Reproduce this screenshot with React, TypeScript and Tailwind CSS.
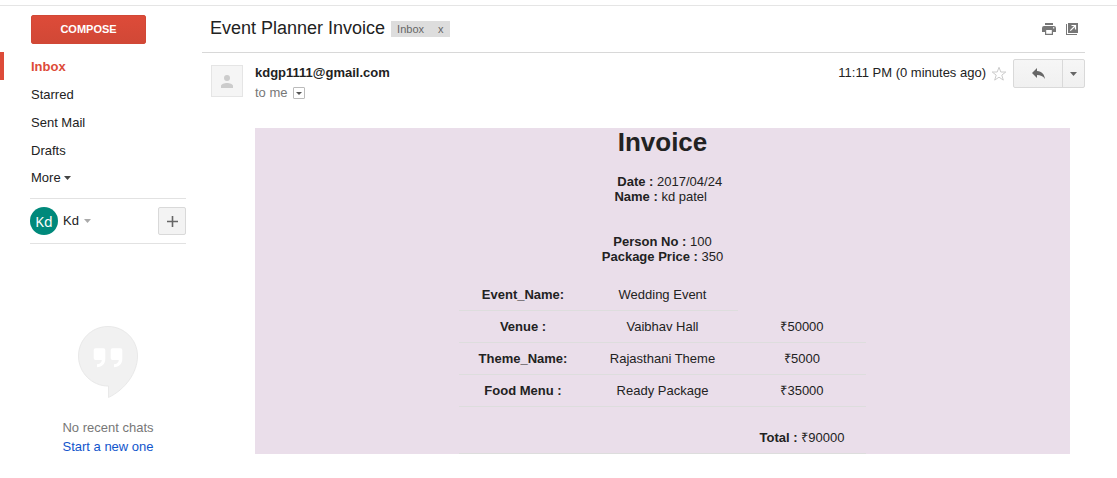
import React from "react";

const folders = ["Starred", "Sent Mail", "Drafts"];

const items = [
  { label: "Event_Name:", value: "Wedding Event", price: "" },
  { label: "Venue :", value: "Vaibhav Hall", price: "₹50000" },
  { label: "Theme_Name:", value: "Rajasthani Theme", price: "₹5000" },
  { label: "Food Menu :", value: "Ready Package", price: "₹35000" },
];

function Caret({ className }: { className: string }) {
  return (
    <svg viewBox="0 0 7 4" className={`h-1 w-[7px] ${className}`} fill="currentColor" aria-hidden="true">
      <path d="M0 0h7L3.5 4z" />
    </svg>
  );
}

function Sidebar() {
  return (
    <aside className="flex w-[202px] shrink-0 flex-col pt-[9px] pr-4">
      <button className="ml-[31px] h-[29px] w-[115px] rounded-[2px] border border-[#d14836] bg-linear-to-b from-[#dd4b39] to-[#d14836] text-[11px] font-bold text-white">
        COMPOSE
      </button>
      <nav className="mt-2 flex flex-col leading-[26px]">
        <a href="#inbox" className="border-l-4 border-[#dd4b39] pt-[2px] pl-[27px] font-bold text-[#dd4b39]">
          Inbox
        </a>
        {folders.map((name) => (
          <a key={name} href="#folder" className="pt-[2px] pl-[31px]">
            {name}
          </a>
        ))}
        <button className="flex h-[26px] items-center gap-[3px] pt-[2px] pl-[31px]">
          More <Caret className="text-[#444]" />
        </button>
      </nav>
      <div className="mt-2 ml-[30px] flex h-[46px] items-center border-y border-[#e2e2e2]">
        <span className="flex size-7 items-center justify-center rounded-full bg-[#00897b] pt-px font-['Noto_Sans',sans-serif] text-[14px] text-white">
          Kd
        </span>
        <button className="ml-[5px] flex items-center gap-[5px]">
          Kd <Caret className="text-[#aaa]" />
        </button>
        <button
          aria-label="New conversation"
          className="ml-auto flex size-7 items-center justify-center rounded-[2px] border border-[#d9d9d9] bg-[#f3f3f3] text-[#666]"
        >
          <svg viewBox="0 0 11 11" className="size-[11px]" fill="currentColor">
            <path d="M4.7 0h1.6v4.7H11v1.6H6.3V11H4.7V6.3H0V4.7h4.7z" />
          </svg>
        </button>
      </div>
      <div className="mt-[82px] ml-[30px] flex flex-col items-center leading-[19px]">
        <svg viewBox="0 0 60 72" className="h-[72px] w-[60px]" aria-hidden="true">
          <path
            d="M30 .5C13.700.5.5 13.700.5 30S13.700 60 30 60h.5v11.500C47 63.500 59.500 47 59.500 30 59.500 13.700 46.300.5 30 .5z"
            fill="#f1f1f1"
            stroke="#e9e9e9"
          />
          <path
            d="M17.500 22.300h8a1.800 1.800 0 0 1 1.800 1.800v9c0 4.800-3.200 8-8.300 8.200v-3c2.900-.2 4.600-1.800 4.800-4.300h-6.300a1.800 1.800 0 0 1-1.800-1.800v-8.100a1.800 1.800 0 0 1 1.800-1.800zM34.500 22.300h8a1.800 1.800 0 0 1 1.800 1.800v9c0 4.800-3.200 8-8.300 8.200v-3c2.900-.2 4.600-1.800 4.800-4.300h-6.300a1.800 1.800 0 0 1-1.800-1.800v-8.100a1.800 1.800 0 0 1 1.800-1.800z"
            fill="#fff"
          />
        </svg>
        <p className="mt-5 text-[#777]">No recent chats</p>
        <a href="#chat" className="text-[#15c]">
          Start a new one
        </a>
      </div>
    </aside>
  );
}

function Subject() {
  return (
    <header className="flex h-[47px] items-center border-b border-[#d8d8d8] pr-[7px] pl-2 text-[#777]">
      <h1 className="pb-[2px] text-[18px] leading-6 text-[#222]">Event Planner Invoice</h1>
      <span className="ml-[6px] flex h-4 items-center bg-[#ddd] text-[11px] text-[#666]">
        <span className="pl-[6px]">Inbox</span>
        <button aria-label="Remove label" className="ml-2 px-[6px]">
          x
        </button>
      </span>
      <button aria-label="Print" className="ml-auto">
        <svg viewBox="0 0 14 12" className="h-3 w-[14px]">
          <path
            fill="currentColor"
            fillRule="evenodd"
            d="M3 0h8v2H3zM2 3h10a2 2 0 0 1 2 2v4h-3v3H3V9H0V5a2 2 0 0 1 2-2zM4.200 7v3.800h5.600V7zM11 4.200v1.300h1.300V4.200z"
          />
        </svg>
      </button>
      <button aria-label="Open in new window" className="ml-[10px]">
        <svg viewBox="0 0 12 12" className="size-3">
          <path fill="currentColor" d="M2 0h10v10H2zM0 1h1v10h10v1H0z" />
          <path d="M4.300 7.700 9 3M5.500 2.500h4v4" fill="none" stroke="#fff" strokeWidth="1.200" />
        </svg>
      </button>
    </header>
  );
}

function Sender() {
  return (
    <div className="flex pt-[6px] pl-[9px]">
      <span className="mt-[6px] flex size-8 items-center justify-center border border-[#e5e5e5] bg-[#f5f5f5]">
        <svg viewBox="0 0 12 13" className="h-[13px] w-3" fill="#ccc" aria-hidden="true">
          <circle cx="6" cy="3" r="3" />
          <path d="M0 13v-2c0-2 3.500-3 6-3s6 1 6 3v2z" />
        </svg>
      </span>
      <div className="ml-3 pt-1 leading-5">
        <p className="font-bold">kdgp1111@gmail.com</p>
        <p className="flex items-center gap-[5px] text-[#777]">
          to me
          <button
            aria-label="Show details"
            className="flex size-3 items-center justify-center rounded-[1px] border border-[#bbb] text-[#555]"
          >
            <svg viewBox="0 0 6 3" className="h-[3px] w-[6px]" fill="currentColor">
              <path d="M0 0h6L3 3z" />
            </svg>
          </button>
        </p>
      </div>
      <div className="ml-auto flex h-[29px] items-center">
        <span className="pb-[2px]">11:11 PM (0 minutes ago)</span>
        <button aria-label="Star" className="mr-[6px] ml-[5px]">
          <svg viewBox="0 0 16 16" className="size-4">
            <path
              d="M8 1.300 9.800 6h5l-4 3.100 1.500 5L8 11.200l-4.300 2.900 1.500-5L1.200 6h5z"
              fill="#fff"
              stroke="#ccc"
            />
          </svg>
        </button>
        <div className="flex h-[29px] rounded-[2px] border border-[#d9d9d9] bg-linear-to-b from-[#f6f6f6] to-[#f0f0f0] text-[#666]">
          <button aria-label="Reply" className="flex w-12 items-center justify-center">
            <svg viewBox="0 0 13 11" className="h-[11px] w-[13px]" fill="currentColor">
              <path d="M5 0v3c5 .5 7.500 3.500 8 8-2-3-4.500-4-8-4v3L0 5z" />
            </svg>
          </button>
          <button
            aria-label="More actions"
            className="flex w-[22px] items-center justify-center border-l border-[#d9d9d9]"
          >
            <Caret className="text-[#666]" />
          </button>
        </div>
      </div>
    </div>
  );
}

function Invoice() {
  return (
    <article className="mt-[25px] mr-[15px] ml-[53px] bg-[#eadeea] text-center leading-[15px]">
      <h2 className="pb-[2px] text-[26px] leading-7 font-bold">Invoice</h2>
      <div className="pt-4">
        <p>
          {"\u00a0\u00a0\u00a0\u00a0"}
          <b>Date :</b> 2017/04/24
        </p>
        <p>
          <b>Name :</b> kd patel{"\u00a0"}
        </p>
      </div>
      <div className="pt-[30px] pb-[15px]">
        <p>
          <b>Person No :</b> 100
        </p>
        <p>
          <b>Package Price :</b> 350
        </p>
      </div>
      <table className="mx-auto border-separate border-spacing-0">
        <tbody>
          {items.map((item) => (
            <tr key={item.label} className="h-8">
              <th className="w-32 border-b border-[#dddddd] py-2">{item.label}</th>
              <td className="w-[151px] border-b border-[#dddddd] py-2">{item.value}</td>
              {item.price && <td className="w-32 border-b border-[#dddddd] py-2">{item.price}</td>}
            </tr>
          ))}
          <tr>
            <td colSpan={2} className="border-b border-[#dddddd]" />
            <td className="border-b border-[#dddddd] pt-[23px] pb-2">
              <b>Total :</b> ₹90000
            </td>
          </tr>
        </tbody>
      </table>
    </article>
  );
}

export default function App() {
  return (
    <div className="min-h-screen bg-white pt-[5px] font-['Liberation_Sans',Arial,sans-serif] text-[13px] text-[#222]">
      <div className="flex border-t border-[#e5e5e5]">
        <Sidebar />
        <main className="mr-8 min-w-0 flex-1">
          <Subject />
          <Sender />
          <Invoice />
        </main>
      </div>
    </div>
  );
}
